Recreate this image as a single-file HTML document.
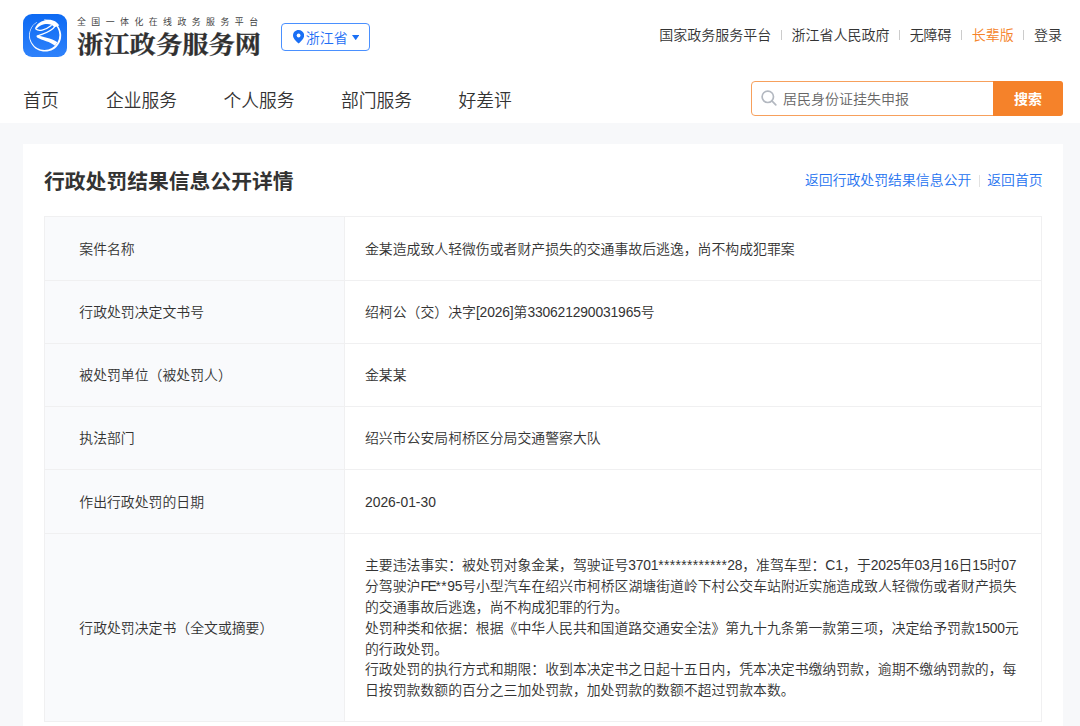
<!DOCTYPE html>
<html lang="zh-CN">
<head>
<meta charset="utf-8">
<title>行政处罚结果信息公开详情</title>
<style>
*{box-sizing:border-box;margin:0;padding:0}
html,body{width:1080px;height:726px;overflow:hidden}
body{background:#f7f8fa;font-family:"Liberation Sans","Noto Sans CJK SC",sans-serif;color:#333;font-size:14px;font-weight:350;position:relative}
.hdr{position:absolute;left:0;top:0;width:1080px;height:123px;background:#fff}
.logo{position:absolute;left:23px;top:13.5px;width:44px;height:43.5px;border-radius:9px;background:linear-gradient(180deg,#0d6af3,#2f82fb)}
.sub{position:absolute;left:77px;top:15.700px;font-size:8.900px;letter-spacing:5.470px;color:#444;font-weight:400;line-height:12px;white-space:nowrap}
.ttl{position:absolute;left:76.500px;top:30px;font-family:"Liberation Serif","Noto Serif CJK SC",serif;font-weight:700;font-size:26px;line-height:34px;color:#303030;-webkit-text-stroke:0.300px #303030;white-space:nowrap;letter-spacing:0;transform:scale(1.012,0.920);transform-origin:0 0}
.prov{position:absolute;left:280.500px;top:23px;width:89.500px;height:28px;border:1px solid #4a90ff;border-radius:4px;color:#1f6ff5;font-size:14px;line-height:26px;white-space:nowrap}
.prov svg{position:absolute}
.prov span{position:absolute;left:24.300px;top:1px}
.toplinks{position:absolute;right:18px;top:25px;font-size:14px;line-height:20px;color:#333;white-space:nowrap}
.toplinks i{display:inline-block;width:1px;height:10px;background:#ccc;margin:0 9.600px;vertical-align:0px}
.toplinks .or{color:#f5832a}
.nav{position:absolute;left:0.700px;top:88.500px;font-size:17.800px;line-height:24px;color:#333;white-space:nowrap}
.nav span{position:absolute;top:0}
.search{position:absolute;left:751px;top:81px;width:312px;height:35px;border:1px solid #f7a05c;border-radius:4px;background:#fff}
.search .ph{position:absolute;left:31px;top:7px;font-size:14px;line-height:20px;color:#666}
.search .btn{position:absolute;right:-1px;top:-1px;width:70px;height:35px;background:#f5822a;color:#fff;font-weight:bold;font-size:14px;line-height:37px;text-align:center;border-radius:0 3px 3px 0}
.card{position:absolute;left:23px;top:144px;width:1039.700px;height:600px;background:#fff}
.h1{position:absolute;left:21px;top:23.500px;font-size:20.800px;font-weight:bold;line-height:28px;color:#333;white-space:nowrap}
.back{position:absolute;right:20px;top:26px;font-size:13.860px;line-height:20px;color:#2472f0;white-space:nowrap}
.back i{display:inline-block;width:1px;height:12px;background:#e2e2e2;margin:0 7.500px;vertical-align:-1.500px}
.tbl{position:absolute;left:21px;top:72px;width:998px;height:506px;font-size:13.860px;color:#333}
.tbl .thbg{position:absolute;left:1px;top:1px;width:299px;height:504px;background:#f9fafc}
.tbl .hl{position:absolute;left:0;width:998px;height:1px;background:#f0f0f1}
.tbl .vl{position:absolute;top:0;width:1px;height:506px;background:#f0f0f1}
.tbl .r{position:absolute;left:0;width:998px}
.tbl .k,.tbl .v{position:absolute;top:0;height:100%;display:flex;align-items:center;white-space:nowrap;line-height:20px}
.tbl .k{left:35.300px}
.tbl .v{left:321px}
.tbl .v.p{line-height:20.830px;padding-top:1.200px}
.d{letter-spacing:-0.220px}
.d2{letter-spacing:-0.150px}
.a{letter-spacing:0.350px}
.f{letter-spacing:-1.300px}
.a2{letter-spacing:0.400px}
</style>
</head>
<body>
<div class="hdr">
  <div class="logo"></div>
  <svg class="lg" style="position:absolute;left:20px;top:10px" width="52" height="52" viewBox="0 0 726 726">
    <defs><clipPath id="cp"><path d="M0 0H726V726H0Z M351 357L180 80L330 60Z" clip-rule="evenodd"/></clipPath></defs>
    <path fill="#fff" fill-rule="evenodd" clip-path="url(#cp)" d="M351 133a224 224 0 1 0 0.100 0ZM343 143a207 207 0 1 1 -0.100 0Z"/>
    <path fill="#fff" d="M208 266C222 200 300 140 400 136C470 136 520 170 548 215L480 240C455 210 420 197 380 197C320 197 262 226 238 258Z"/>
    <path fill="none" stroke="#fff" stroke-width="17" stroke-linecap="round" d="M222 266C256 300 350 286 436 216"/>
    <path fill="none" stroke="#fff" stroke-width="17" stroke-linecap="round" d="M490 226C440 306 330 326 250 362"/>
    <path fill="#fff" d="M238 352C300 372 440 388 522 452L488 500C430 440 300 420 244 386C228 374 226 358 238 352Z"/>
  </svg>
  <div class="sub">全国一体化在线政务服务平台</div>
  <div class="ttl">浙江政务服务网</div>
  <div class="prov">
    <svg style="left:11.800px;top:6.300px" width="11.200" height="13.400" viewBox="0 0 11.200 13.400"><path d="M5.600 0C2.500 0 0 2.400 0 5.400C0 8.600 3.600 11.800 5.600 13.400C7.600 11.800 11.200 8.600 11.200 5.400C11.200 2.400 8.700 0 5.600 0Z" fill="#1a6ff5"/><circle cx="5.600" cy="5.500" r="1.900" fill="#fff"/></svg>
    <span>浙江省</span>
    <svg style="left:70px;top:10.700px" width="7.400" height="5.200" viewBox="0 0 7.400 5.200"><path d="M0 0H7.400L3.700 5.200Z" fill="#1a6ff5"/></svg>
  </div>
  <div class="toplinks">国家政务服务平台<i></i>浙江省人民政府<i></i>无障碍<i></i><span class="or">长辈版</span><i></i>登录</div>
  <div class="nav"><span style="left:22.500px">首页</span><span style="left:105.200px">企业服务</span><span style="left:222.700px">个人服务</span><span style="left:340.300px">部门服务</span><span style="left:457.800px">好差评</span></div>
  <div class="search">
    <svg style="position:absolute;left:9.300px;top:8.300px" width="16" height="16" viewBox="0 0 16 16"><circle cx="6.800" cy="6.800" r="5.700" fill="none" stroke="#b3b8c0" stroke-width="1.700"/><path d="M10.900 10.900L14.800 14.800" stroke="#b3b8c0" stroke-width="1.700" stroke-linecap="round"/></svg>
    <div class="ph">居民身份证挂失申报</div>
    <div class="btn">搜索</div>
  </div>
</div>
<div class="card">
  <div class="h1">行政处罚结果信息公开详情</div>
  <div class="back">返回行政处罚结果信息公开<i></i>返回首页</div>
  <div class="tbl">
    <div class="thbg"></div>
    <div class="hl" style="top:0px"></div>
    <div class="hl" style="top:64px"></div>
    <div class="hl" style="top:127px"></div>
    <div class="hl" style="top:190px"></div>
    <div class="hl" style="top:253px"></div>
    <div class="hl" style="top:317px"></div>
    <div class="hl" style="top:505px"></div>
    <div class="vl" style="left:0px"></div>
    <div class="vl" style="left:300px"></div>
    <div class="vl" style="left:997px"></div>
    <div class="r" style="top:1px;height:63px"><div class="k">案件名称</div><div class="v">金某造成致人轻微伤或者财产损失的交通事故后逃逸，尚不构成犯罪案</div></div>
    <div class="r" style="top:65px;height:62px"><div class="k">行政处罚决定文书号</div><div class="v">绍柯公（交）决字<span class="d2">[2026]</span>第<span class="d2">330621290031965</span>号</div></div>
    <div class="r" style="top:128px;height:62px"><div class="k">被处罚单位（被处罚人）</div><div class="v">金某某</div></div>
    <div class="r" style="top:191px;height:62px"><div class="k">执法部门</div><div class="v">绍兴市公安局柯桥区分局交通警察大队</div></div>
    <div class="r" style="top:254px;height:63px"><div class="k">作出行政处罚的日期</div><div class="v">2026-01-30</div></div>
    <div class="r" style="top:318px;height:187px"><div class="k">行政处罚决定书（全文或摘要）</div><div class="v p"><div>主要违法事实：被处罚对象金某，驾驶证号<span class="d">3701</span><span class="a">************</span><span class="d">28</span>，准驾车型：C1，于<span class="d">2025</span>年<span class="d">03</span>月<span class="d">16</span>日<span class="d">15</span>时<span class="d">07</span><br>分驾驶沪<span class="f">FE</span><span class="a2">**</span><span class="d">95</span>号小型汽车在绍兴市柯桥区湖塘街道岭下村公交车站附近实施造成致人轻微伤或者财产损失<br>的交通事故后逃逸，尚不构成犯罪的行为。<br>处罚种类和依据：根据《中华人民共和国道路交通安全法》第九十九条第一款第三项，决定给予罚款<span class="d">1500</span>元<br>的行政处罚。<br>行政处罚的执行方式和期限：收到本决定书之日起十五日内，凭本决定书缴纳罚款，逾期不缴纳罚款的，每<br>日按罚款数额的百分之三加处罚款，加处罚款的数额不超过罚款本数。</div></div></div>
  </div>
</div>
</body>
</html>
